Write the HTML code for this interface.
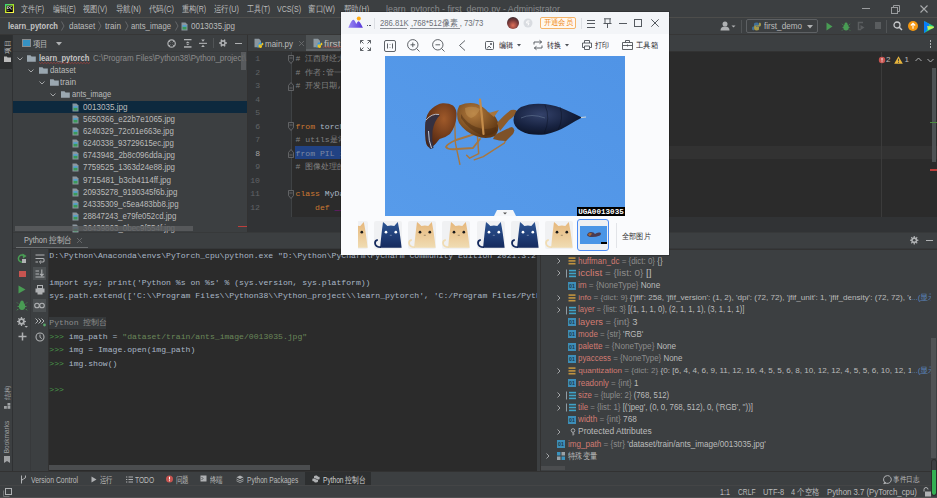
<!DOCTYPE html>
<html><head><meta charset="utf-8">
<style>
*{margin:0;padding:0;box-sizing:border-box}
html,body{width:937px;height:498px;overflow:hidden;background:#3c3f41;font-family:"Liberation Sans",sans-serif;font-size:8px;color:#bbbbbb;position:relative}
.a{position:absolute;white-space:pre}
.t{position:absolute;white-space:pre;transform-origin:0 50%}
svg{position:absolute;overflow:visible}
</style></head><body>

<div class="a" style="left:0px;top:0px;width:937px;height:17px;background:#3c3f41;"></div>
<div class="a" style="left:0px;top:17px;width:937px;height:1px;background:#4d4d4b;"></div>
<div class="a" style="left:0px;top:18px;width:937px;height:17px;background:#3c3f41;"></div>
<div class="a" style="left:0px;top:34px;width:937px;height:1px;background:#363636;"></div>
<div class="a" style="left:0px;top:35px;width:12px;height:436px;background:#3c3f41;"></div>
<div class="a" style="left:12px;top:35px;width:1px;height:436px;background:#2f3133;"></div>
<div class="a" style="left:0px;top:35px;width:12px;height:34px;background:#2d2f30;"></div>
<div class="a" style="left:13px;top:35px;width:234px;height:198px;background:#3c3f41;"></div>
<div class="a" style="left:13px;top:51px;width:234px;height:1px;background:#37393b;"></div>
<div class="a" style="left:247px;top:35px;width:690px;height:17px;background:#3c3f41;"></div>
<div class="a" style="left:247px;top:35px;width:1px;height:198px;background:#323232;"></div>
<div class="a" style="left:306px;top:35px;width:35px;height:16px;background:#4e5254;"></div>
<div class="a" style="left:306px;top:49px;width:35px;height:2px;background:#5d6164;"></div>
<div class="a" style="left:248px;top:51px;width:689px;height:1px;background:#323232;"></div>
<div class="a" style="left:248px;top:52px;width:689px;height:165px;background:#2b2b2b;"></div>
<div class="a" style="left:248px;top:52px;width:43px;height:165px;background:#313335;"></div>
<div class="a" style="left:291px;top:52px;width:1px;height:165px;background:#3f4244;"></div>
<div class="a" style="left:295px;top:146px;width:642px;height:13.4px;background:#323232;"></div>
<div class="a" style="left:881px;top:52px;width:1px;height:165px;background:#3b3b3b;"></div>
<div class="a" style="left:248px;top:217px;width:689px;height:16px;background:#313335;"></div>
<div class="a" style="left:932px;top:68px;width:4.3px;height:94px;background:#4e5254;"></div>
<div class="a" style="left:930px;top:122px;width:7px;height:1px;background:#4e8a3e;"></div>
<div class="a" style="left:930px;top:169px;width:7px;height:1.5px;background:#bc3f3c;"></div>
<div class="a" style="left:13px;top:232px;width:924px;height:1px;background:#37393a;"></div>
<div class="a" style="left:13px;top:233px;width:924px;height:15px;background:#3c3f41;"></div>
<div class="a" style="left:16px;top:247px;width:72px;height:2px;background:#6b6e70;"></div>
<div class="a" style="left:13px;top:248px;width:924px;height:1px;background:#36383a;"></div>
<div class="a" style="left:13px;top:249px;width:35px;height:222px;background:#3c3f41;"></div>
<div class="a" style="left:30px;top:249px;width:1px;height:222px;background:#37393b;"></div>
<div class="a" style="left:48px;top:249px;width:1px;height:222px;background:#323232;"></div>
<div class="a" style="left:49px;top:249px;width:488px;height:222px;background:#2b2b2b;"></div>
<div class="a" style="left:49px;top:465px;width:261px;height:5px;background:#4b4d4f;"></div>
<div class="a" style="left:540px;top:249px;width:397px;height:222px;background:#3c3f41;"></div>
<div class="a" style="left:540px;top:249px;width:1px;height:222px;background:#323232;"></div>
<div class="a" style="left:541px;top:466px;width:24px;height:4px;background:#4b4d4f;"></div>
<div class="a" style="left:931px;top:338px;width:5px;height:120px;background:#505355;"></div>
<div class="a" style="left:0px;top:471px;width:937px;height:1px;background:#323232;"></div>
<div class="a" style="left:0px;top:472px;width:937px;height:13px;background:#3c3f41;"></div>
<div class="a" style="left:305px;top:472px;width:66px;height:13px;background:#2d2f30;"></div>
<div class="a" style="left:0px;top:485px;width:937px;height:13px;background:#3c3f41;"></div>
<div class="a" style="left:0px;top:485px;width:937px;height:1px;background:#444546;"></div>
<div class="a" style="left:0px;top:497px;width:937px;height:1px;background:#4e4f50;"></div>
<div class="t" style="left:21px;top:3.80px;line-height:11.00px;font-size:8.8px;color:#bbbbbb;font-weight:400;font-family:'Liberation Sans',sans-serif;transform:scaleX(0.787);">文件(F)</div>
<div class="t" style="left:53px;top:3.80px;line-height:11.00px;font-size:8.8px;color:#bbbbbb;font-weight:400;font-family:'Liberation Sans',sans-serif;transform:scaleX(0.763);">编辑(E)</div>
<div class="t" style="left:83px;top:3.80px;line-height:11.00px;font-size:8.8px;color:#bbbbbb;font-weight:400;font-family:'Liberation Sans',sans-serif;transform:scaleX(0.807);">视图(V)</div>
<div class="t" style="left:116px;top:3.80px;line-height:11.00px;font-size:8.8px;color:#bbbbbb;font-weight:400;font-family:'Liberation Sans',sans-serif;transform:scaleX(0.827);">导航(N)</div>
<div class="t" style="left:149px;top:3.80px;line-height:11.00px;font-size:8.8px;color:#bbbbbb;font-weight:400;font-family:'Liberation Sans',sans-serif;transform:scaleX(0.827);">代码(C)</div>
<div class="t" style="left:181.5px;top:3.80px;line-height:11.00px;font-size:8.8px;color:#bbbbbb;font-weight:400;font-family:'Liberation Sans',sans-serif;transform:scaleX(0.798);">重构(R)</div>
<div class="t" style="left:214px;top:3.80px;line-height:11.00px;font-size:8.8px;color:#bbbbbb;font-weight:400;font-family:'Liberation Sans',sans-serif;transform:scaleX(0.827);">运行(U)</div>
<div class="t" style="left:246.7px;top:3.80px;line-height:11.00px;font-size:8.8px;color:#bbbbbb;font-weight:400;font-family:'Liberation Sans',sans-serif;transform:scaleX(0.790);">工具(T)</div>
<div class="t" style="left:277px;top:3.80px;line-height:11.00px;font-size:8.8px;color:#bbbbbb;font-weight:400;font-family:'Liberation Sans',sans-serif;transform:scaleX(0.805);">VCS(S)</div>
<div class="t" style="left:308px;top:3.80px;line-height:11.00px;font-size:8.8px;color:#bbbbbb;font-weight:400;font-family:'Liberation Sans',sans-serif;transform:scaleX(0.839);">窗口(W)</div>
<div class="t" style="left:343.5px;top:3.80px;line-height:11.00px;font-size:8.8px;color:#bbbbbb;font-weight:400;font-family:'Liberation Sans',sans-serif;transform:scaleX(0.831);">帮助(H)</div>
<div class="t" style="left:386px;top:3.80px;line-height:11.00px;font-size:8.8px;color:#8a8c8e;font-weight:400;font-family:'Liberation Sans',sans-serif;transform:scaleX(1.005);">learn_pytorch - first_demo.py - Administrator</div>
<div class="a" style="left:862px;top:8px;width:8px;height:1px;background:#9a9c9e;"></div>
<svg style="left:891px;top:4.5px" width="9" height="9"><rect x="0.5" y="2.5" width="6" height="6" fill="none" stroke="#9a9c9e" stroke-width="1"/><path d="M2.5 2.5V0.5H8.5V6.5H6.5" fill="none" stroke="#9a9c9e" stroke-width="1"/></svg>
<svg style="left:920px;top:5px" width="8" height="8"><path d="M0.5 0.5L7.5 7.5M7.5 0.5L0.5 7.5" stroke="#a8aaac" stroke-width="1.1"/></svg>
<svg style="left:5px;top:4px" width="9" height="9"><defs><linearGradient id="pcg" x1="0" y1="0" x2="0.6" y2="1"><stop offset="0" stop-color="#21d789"/><stop offset="0.55" stop-color="#b8e020"/><stop offset="1" stop-color="#fcf84a"/></linearGradient></defs><rect x="0" y="0" width="9" height="9" fill="url(#pcg)"/><rect x="1.4" y="1.6" width="6.4" height="6.4" fill="#000"/><path d="M2.3 5.2V2.6H3.6Q4.5 2.6 4.5 3.5Q4.5 4.3 3.6 4.3H2.3M7.2 2.8Q6.8 2.5 6.2 2.5Q5.1 2.5 5.1 3.8Q5.1 5.1 6.2 5.1Q6.8 5.1 7.2 4.8" fill="none" stroke="#e8e8e8" stroke-width="0.8"/><rect x="2.2" y="6.5" width="2.2" height="0.6" fill="#bbb"/></svg>
<div class="t" style="left:7.7px;top:21.20px;line-height:11.00px;font-size:8.8px;color:#c4c4c4;font-weight:700;font-family:'Liberation Sans',sans-serif;transform:scaleX(0.859);">learn_pytorch</div>
<svg style="left:61.0px;top:21px" width="4" height="10"><path d="M0.5 0.5L3 5L0.5 9.5" fill="none" stroke="#6e7072" stroke-width="0.8"/></svg>
<svg style="left:98.2px;top:21px" width="4" height="10"><path d="M0.5 0.5L3 5L0.5 9.5" fill="none" stroke="#6e7072" stroke-width="0.8"/></svg>
<svg style="left:124.5px;top:21px" width="4" height="10"><path d="M0.5 0.5L3 5L0.5 9.5" fill="none" stroke="#6e7072" stroke-width="0.8"/></svg>
<svg style="left:175.1px;top:21px" width="4" height="10"><path d="M0.5 0.5L3 5L0.5 9.5" fill="none" stroke="#6e7072" stroke-width="0.8"/></svg>
<div class="t" style="left:68.7px;top:21.20px;line-height:11.00px;font-size:8.8px;color:#bbbbbb;font-weight:400;font-family:'Liberation Sans',sans-serif;transform:scaleX(0.908);">dataset</div>
<div class="t" style="left:105px;top:21.20px;line-height:11.00px;font-size:8.8px;color:#bbbbbb;font-weight:400;font-family:'Liberation Sans',sans-serif;transform:scaleX(0.934);">train</div>
<div class="t" style="left:131.3px;top:21.20px;line-height:11.00px;font-size:8.8px;color:#bbbbbb;font-weight:400;font-family:'Liberation Sans',sans-serif;transform:scaleX(0.879);">ants_image</div>
<svg style="left:181px;top:21.5px" width="7" height="9"><path d="M0.5 0.5H4.5L6.5 2.5V8.5H0.5Z" fill="#9aa7b0" opacity="0.85"/><rect x="1.5" y="4.5" width="4" height="3" fill="#3a9a5b"/><rect x="1.5" y="3.2" width="4" height="1.5" fill="#4aa0d8"/></svg>
<div class="t" style="left:191px;top:21.20px;line-height:11.00px;font-size:8.8px;color:#bbbbbb;font-weight:400;font-family:'Liberation Sans',sans-serif;transform:scaleX(0.908);">0013035.jpg</div>
<svg style="left:720px;top:21px" width="16" height="10"><circle cx="5" cy="3" r="2.5" fill="#afb1b3"/><path d="M0.5 9.5Q0.5 5.5 5 5.5Q9.5 5.5 9.5 9.5Z" fill="#afb1b3"/><path d="M11.5 4.5L15.5 4.5L13.5 6.5Z" fill="#afb1b3"/></svg>
<div class="a" style="left:741px;top:20px;width:1px;height:13px;background:#515456;"></div>
<div class="a" style="left:746px;top:19px;width:72px;height:14px;border:1px solid #5e6164;border-radius:2px;background:#3c3f41"></div>
<svg style="left:752px;top:22px" width="9" height="9"><path d="M4.5 0.5C2 0.5 2 1.5 2 2.5V4H5V4.6H1.2C0.3 4.6 0 5.4 0 6.5C0 7.6 0.4 8.2 1.2 8.2H2V6.8C2 6 2.6 5.5 3.3 5.5H5.7C6.4 5.5 6.9 5 6.9 4.3V2.2C6.9 1 5.8 0.5 4.5 0.5Z" fill="#3f6f98"/><path d="M4.5 8.5C7 8.5 7 7.5 7 6.5V5H4V4.4H7.8C8.7 4.4 9 3.6 9 2.5C9 1.4 8.6 0.8 7.8 0.8H7V2.2C7 3 6.4 3.5 5.7 3.5H3.3C2.6 3.5 2.1 4 2.1 4.7V6.8C2.1 8 3.2 8.5 4.5 8.5Z" fill="#a89a48"/></svg>
<div class="t" style="left:764px;top:21.20px;line-height:11.00px;font-size:8.8px;color:#bbbbbb;font-weight:400;font-family:'Liberation Sans',sans-serif;transform:scaleX(0.925);">first_demo</div>
<svg style="left:807px;top:24.5px" width="6" height="4"><path d="M0 0H6L3 3.5Z" fill="#afb1b3"/></svg>
<svg style="left:826px;top:21.5px" width="7" height="9"><path d="M0.5 0.5L6.5 4.5L0.5 8.5Z" fill="#499c54"/></svg>
<svg style="left:841.5px;top:21.5px" width="9" height="10" viewBox="0 0 10 11"><ellipse cx="4.5" cy="5.8" rx="3" ry="3.6" fill="#499c54"/><path d="M1 3L0 2M8 3L9 2M0.5 6H8.5M1 8.5L0 9.5M8 8.5L9 9.5" stroke="#499c54" stroke-width="0.9"/><circle cx="4.5" cy="2" r="1.6" fill="#499c54"/></svg>
<svg style="left:857px;top:21px" width="8" height="10"><path d="M6 1.5H1.5V8.5H4" fill="none" stroke="#5a5d5f" stroke-width="1.5"/><path d="M3.5 4L7.5 6.5L3.5 9Z" fill="#5a5d5f"/></svg>
<div class="a" style="left:875px;top:22px;width:6px;height:7px;background:#5a5d5f;"></div>
<div class="a" style="left:886px;top:20px;width:1px;height:13px;background:#515456;"></div>
<svg style="left:893px;top:21px" width="10" height="10"><circle cx="4" cy="4" r="3" fill="none" stroke="#c9cbcd" stroke-width="1.3"/><path d="M6.2 6.2L9 9" stroke="#c9cbcd" stroke-width="1.5"/></svg>
<svg style="left:908px;top:21px" width="10" height="10"><circle cx="5" cy="5" r="5" fill="#f49810"/><path d="M5 2.3V7.8M2.8 4.5L5 2.3L7.2 4.5" fill="none" stroke="#fff" stroke-width="1.1"/></svg>
<svg style="left:923px;top:20.5px" width="12" height="12"><path d="M1 1Q1 0 2 0.5L10.5 5Q11.5 6 10.5 7L2 11.5Q1 12 1 11Z" fill="#21d789"/><path d="M1 1Q1 0 2 0.5L6.5 3L4 9L2 11.5Q1 12 1 11Z" fill="#087cfa"/><path d="M4 5L10.5 5.5Q11.5 6 10.5 7L5 9Z" fill="#fcf84a" opacity="0.75"/></svg>
<div class="t" style="left:4px;top:45.74px;line-height:8.12px;font-size:6.5px;color:#bbbbbb;font-weight:400;font-family:'Liberation Sans',sans-serif;transform:rotate(-90deg);transform-origin:4px 4px;">项目</div>
<svg style="left:4px;top:56px" width="7" height="6"><path d="M0 0.5H2.8L3.6 1.5H7V6H0Z" fill="#bbbbbb"/></svg>
<div class="t" style="left:4px;top:391.94px;line-height:8.12px;font-size:6.5px;color:#a0a2a4;font-weight:400;font-family:'Liberation Sans',sans-serif;transform:rotate(-90deg);transform-origin:4px 4px;">结构</div>
<svg style="left:4px;top:402.5px" width="7" height="6"><rect x="3.5" y="0" width="2.8" height="2.6" fill="#a0a2a4"/><rect x="0" y="3" width="2.8" height="2.8" fill="#a0a2a4"/><rect x="3.5" y="3" width="2.8" height="2.8" fill="#a0a2a4"/></svg>
<div class="t" style="left:-13px;top:433px;width:40px;line-height:8px;font-size:6.5px;color:#a0a2a4;transform:rotate(-90deg);transform-origin:20px 4px;text-align:center">Bookmarks</div>
<svg style="left:4px;top:456px" width="6" height="7"><path d="M0 0H6V7L3 5L0 7Z" fill="#a0a2a4"/></svg>
<div class="a" style="left:21.5px;top:38.5px;width:9px;height:8px;border:1px solid #8a8c8e;background:#3592c4"></div>
<div class="t" style="left:33px;top:38.50px;line-height:11.00px;font-size:8.8px;color:#bbbbbb;font-weight:400;font-family:'Liberation Sans',sans-serif;transform:scaleX(0.833);">项目</div>
<svg style="left:56px;top:41.5px" width="6" height="4"><path d="M0 0H6L3 3.5Z" fill="#afb1b3"/></svg>
<svg style="left:166.5px;top:38.8px" width="10" height="10"><circle cx="4.6" cy="4.5" r="3.7" fill="none" stroke="#afb1b3" stroke-width="1.2"/><path d="M2.2 2.1L3.4 3.3M7 2.1L5.8 3.3M2.2 6.9L3.4 5.7M7 6.9L5.8 5.7" stroke="#afb1b3" stroke-width="1"/></svg>
<svg style="left:183.5px;top:38.8px" width="8" height="9"><rect x="0" y="0" width="7.5" height="1.3" fill="#afb1b3"/><rect x="0" y="7.2" width="7.5" height="1.5" fill="#afb1b3"/><path d="M3.75 2.4L5.6 4H1.9Z M3.75 6.3L5.6 4.7H1.9Z" fill="#afb1b3"/></svg>
<svg style="left:199px;top:39px" width="8" height="9"><rect x="0" y="3.8" width="8" height="1.1" fill="#afb1b3"/><path d="M2.2 0.6H5.8L4 2.8Z M2.2 8H5.8L4 5.8Z" fill="#afb1b3"/></svg>
<div class="a" style="left:213px;top:38px;width:1px;height:10px;background:#515456;"></div>
<svg style="left:219.3px;top:39px" width="11" height="11"><path d="M6.76 3.18L7.93 3.27L7.93 4.73L6.76 4.82L6.09 5.98L6.60 7.04L5.34 7.77L4.67 6.80L3.33 6.80L2.66 7.77L1.40 7.04L1.91 5.98L1.24 4.82L0.07 4.73L0.07 3.27L1.24 3.18L1.91 2.02L1.40 0.96L2.66 0.23L3.33 1.20L4.67 1.20L5.34 0.23L6.60 0.96L6.09 2.02Z" fill="#afb1b3"/><circle cx="4.0" cy="4.0" r="1.28" fill="#3c3f41"/></svg>
<div class="a" style="left:235px;top:43px;width:7px;height:1.2px;background:#afb1b3;"></div>
<div class="a" style="left:13px;top:100.64px;width:234px;height:12.2px;background:#0d293e;"></div>
<div class="a" style="left:0;top:0;width:937px;height:498px;clip-path:inset(52px 690px 265px 13px)">
<svg style="left:17.0px;top:56.7px" width="6" height="4"><path d="M0.5 0.5L3 3L5.5 0.5" fill="none" stroke="#afb1b3" stroke-width="0.9"/></svg>
<svg style="left:27.3px;top:54.5px" width="9" height="7"><path d="M0 0.3H3.5L4.5 1.5H8.8V6.7H0Z" fill="#9aa7b0"/></svg>
<div class="t" style="left:38.6px;top:53.00px;line-height:11.00px;font-size:8.8px;color:#c4c4c4;font-weight:700;font-family:'Liberation Sans',sans-serif;transform:scaleX(0.866);">learn_pytorch</div>
<svg style="left:38.6px;top:61.80px" width="51" height="3"><path d="M0.0 0.4L1.5 1.6L3.0 0.4L4.5 1.6L6.0 0.4L7.5 1.6L9.0 0.4L10.5 1.6L12.0 0.4L13.5 1.6L15.0 0.4L16.5 1.6L18.0 0.4L19.5 1.6L21.0 0.4L22.5 1.6L24.0 0.4L25.5 1.6L27.0 0.4L28.5 1.6L30.0 0.4L31.5 1.6L33.0 0.4L34.5 1.6L36.0 0.4L37.5 1.6L39.0 0.4L40.5 1.6L42.0 0.4L43.5 1.6L45.0 0.4L46.5 1.6L48.0 0.4L49.5 1.6L51.0 0.4" fill="none" stroke="#c8403c" stroke-width="0.55"/></svg>
<div class="t" style="left:93px;top:53.00px;line-height:11.00px;font-size:8.8px;color:#8c8c8c;font-weight:400;font-family:'Liberation Sans',sans-serif;transform:scaleX(0.904);">C:\Program Files\Python38\Python_project\</div>
<svg style="left:28.0px;top:68.86px" width="6" height="4"><path d="M0.5 0.5L3 3L5.5 0.5" fill="none" stroke="#afb1b3" stroke-width="0.9"/></svg>
<svg style="left:39px;top:66.66px" width="9" height="7"><path d="M0 0.3H3.5L4.5 1.5H8.8V6.7H0Z" fill="#9aa7b0"/></svg>
<div class="t" style="left:49.8px;top:65.16px;line-height:11.00px;font-size:8.8px;color:#bbbbbb;font-weight:400;font-family:'Liberation Sans',sans-serif;transform:scaleX(0.891);">dataset</div>
<svg style="left:39.3px;top:81.02px" width="6" height="4"><path d="M0.5 0.5L3 3L5.5 0.5" fill="none" stroke="#afb1b3" stroke-width="0.9"/></svg>
<svg style="left:49.8px;top:78.82px" width="9" height="7"><path d="M0 0.3H3.5L4.5 1.5H8.8V6.7H0Z" fill="#9aa7b0"/></svg>
<div class="t" style="left:60.2px;top:77.32px;line-height:11.00px;font-size:8.8px;color:#bbbbbb;font-weight:400;font-family:'Liberation Sans',sans-serif;transform:scaleX(0.940);">train</div>
<svg style="left:50.1px;top:93.18px" width="6" height="4"><path d="M0.5 0.5L3 3L5.5 0.5" fill="none" stroke="#afb1b3" stroke-width="0.9"/></svg>
<svg style="left:61px;top:90.98px" width="9" height="7"><path d="M0 0.3H3.5L4.5 1.5H8.8V6.7H0Z" fill="#9aa7b0"/></svg>
<div class="t" style="left:71.5px;top:89.48px;line-height:11.00px;font-size:8.8px;color:#bbbbbb;font-weight:400;font-family:'Liberation Sans',sans-serif;transform:scaleX(0.864);">ants_image</div>
<svg style="left:72.3px;top:102.64px" width="7" height="9"><path d="M0.5 0.5H4.5L6.5 2.5V8.5H0.5Z" fill="#9aa7b0" opacity="0.85"/><rect x="1.5" y="4.5" width="4" height="3" fill="#3a9a5b"/><rect x="1.5" y="3.2" width="4" height="1.5" fill="#4aa0d8"/></svg>
<div class="t" style="left:82.7px;top:101.64px;line-height:11.00px;font-size:8.8px;color:#bbbbbb;font-weight:400;font-family:'Liberation Sans',sans-serif;transform:scaleX(0.921);">0013035.jpg</div>
<svg style="left:72.3px;top:114.8px" width="7" height="9"><path d="M0.5 0.5H4.5L6.5 2.5V8.5H0.5Z" fill="#9aa7b0" opacity="0.85"/><rect x="1.5" y="4.5" width="4" height="3" fill="#3a9a5b"/><rect x="1.5" y="3.2" width="4" height="1.5" fill="#4aa0d8"/></svg>
<div class="t" style="left:82.7px;top:113.80px;line-height:11.00px;font-size:8.8px;color:#bbbbbb;font-weight:400;font-family:'Liberation Sans',sans-serif;transform:scaleX(0.900);">5650366_e22b7e1065.jpg</div>
<svg style="left:72.3px;top:126.96000000000001px" width="7" height="9"><path d="M0.5 0.5H4.5L6.5 2.5V8.5H0.5Z" fill="#9aa7b0" opacity="0.85"/><rect x="1.5" y="4.5" width="4" height="3" fill="#3a9a5b"/><rect x="1.5" y="3.2" width="4" height="1.5" fill="#4aa0d8"/></svg>
<div class="t" style="left:82.7px;top:125.96px;line-height:11.00px;font-size:8.8px;color:#bbbbbb;font-weight:400;font-family:'Liberation Sans',sans-serif;transform:scaleX(0.892);">6240329_72c01e663e.jpg</div>
<svg style="left:72.3px;top:139.12px" width="7" height="9"><path d="M0.5 0.5H4.5L6.5 2.5V8.5H0.5Z" fill="#9aa7b0" opacity="0.85"/><rect x="1.5" y="4.5" width="4" height="3" fill="#3a9a5b"/><rect x="1.5" y="3.2" width="4" height="1.5" fill="#4aa0d8"/></svg>
<div class="t" style="left:82.7px;top:138.12px;line-height:11.00px;font-size:8.8px;color:#bbbbbb;font-weight:400;font-family:'Liberation Sans',sans-serif;transform:scaleX(0.892);">6240338_93729615ec.jpg</div>
<svg style="left:72.3px;top:151.28px" width="7" height="9"><path d="M0.5 0.5H4.5L6.5 2.5V8.5H0.5Z" fill="#9aa7b0" opacity="0.85"/><rect x="1.5" y="4.5" width="4" height="3" fill="#3a9a5b"/><rect x="1.5" y="3.2" width="4" height="1.5" fill="#4aa0d8"/></svg>
<div class="t" style="left:82.7px;top:150.28px;line-height:11.00px;font-size:8.8px;color:#bbbbbb;font-weight:400;font-family:'Liberation Sans',sans-serif;transform:scaleX(0.904);">6743948_2b8c096dda.jpg</div>
<svg style="left:72.3px;top:163.44px" width="7" height="9"><path d="M0.5 0.5H4.5L6.5 2.5V8.5H0.5Z" fill="#9aa7b0" opacity="0.85"/><rect x="1.5" y="4.5" width="4" height="3" fill="#3a9a5b"/><rect x="1.5" y="3.2" width="4" height="1.5" fill="#4aa0d8"/></svg>
<div class="t" style="left:82.7px;top:162.44px;line-height:11.00px;font-size:8.8px;color:#bbbbbb;font-weight:400;font-family:'Liberation Sans',sans-serif;transform:scaleX(0.900);">7759525_1363d24e88.jpg</div>
<svg style="left:72.3px;top:175.6px" width="7" height="9"><path d="M0.5 0.5H4.5L6.5 2.5V8.5H0.5Z" fill="#9aa7b0" opacity="0.85"/><rect x="1.5" y="4.5" width="4" height="3" fill="#3a9a5b"/><rect x="1.5" y="3.2" width="4" height="1.5" fill="#4aa0d8"/></svg>
<div class="t" style="left:82.7px;top:174.60px;line-height:11.00px;font-size:8.8px;color:#bbbbbb;font-weight:400;font-family:'Liberation Sans',sans-serif;transform:scaleX(0.916);">9715481_b3cb4114ff.jpg</div>
<svg style="left:72.3px;top:187.76px" width="7" height="9"><path d="M0.5 0.5H4.5L6.5 2.5V8.5H0.5Z" fill="#9aa7b0" opacity="0.85"/><rect x="1.5" y="4.5" width="4" height="3" fill="#3a9a5b"/><rect x="1.5" y="3.2" width="4" height="1.5" fill="#4aa0d8"/></svg>
<div class="t" style="left:82.7px;top:186.76px;line-height:11.00px;font-size:8.8px;color:#bbbbbb;font-weight:400;font-family:'Liberation Sans',sans-serif;transform:scaleX(0.901);">20935278_9190345f6b.jpg</div>
<svg style="left:72.3px;top:199.92000000000002px" width="7" height="9"><path d="M0.5 0.5H4.5L6.5 2.5V8.5H0.5Z" fill="#9aa7b0" opacity="0.85"/><rect x="1.5" y="4.5" width="4" height="3" fill="#3a9a5b"/><rect x="1.5" y="3.2" width="4" height="1.5" fill="#4aa0d8"/></svg>
<div class="t" style="left:82.7px;top:198.92px;line-height:11.00px;font-size:8.8px;color:#bbbbbb;font-weight:400;font-family:'Liberation Sans',sans-serif;transform:scaleX(0.896);">24335309_c5ea483bb8.jpg</div>
<svg style="left:72.3px;top:212.08px" width="7" height="9"><path d="M0.5 0.5H4.5L6.5 2.5V8.5H0.5Z" fill="#9aa7b0" opacity="0.85"/><rect x="1.5" y="4.5" width="4" height="3" fill="#3a9a5b"/><rect x="1.5" y="3.2" width="4" height="1.5" fill="#4aa0d8"/></svg>
<div class="t" style="left:82.7px;top:211.08px;line-height:11.00px;font-size:8.8px;color:#bbbbbb;font-weight:400;font-family:'Liberation Sans',sans-serif;transform:scaleX(0.895);">28847243_e79fe052cd.jpg</div>
<svg style="left:72.3px;top:224.24px" width="7" height="9"><path d="M0.5 0.5H4.5L6.5 2.5V8.5H0.5Z" fill="#9aa7b0" opacity="0.85"/><rect x="1.5" y="4.5" width="4" height="3" fill="#3a9a5b"/><rect x="1.5" y="3.2" width="4" height="1.5" fill="#4aa0d8"/></svg>
<div class="t" style="left:82.7px;top:223.24px;line-height:11.00px;font-size:8.8px;color:#bbbbbb;font-weight:400;font-family:'Liberation Sans',sans-serif;transform:scaleX(0.904);">36439863_0bec9f554f.jpg</div>
</div>
<div class="a" style="left:241px;top:52px;width:5px;height:18px;background:rgba(95,98,100,0.8);"></div>
<div class="a" style="left:15px;top:226px;width:178px;height:5px;background:rgba(90,93,95,0.85)"></div>
<div class="a" style="left:238px;top:226px;width:9px;height:1.2px;background:#bc3f3c;"></div>
<svg style="left:254px;top:38px" width="10" height="11"><path d="M0.5 0.8H5L7 2.8V9.2H0.5Z" fill="#9aa7b0" opacity="0.85"/><g transform="translate(3.2,4.2) scale(0.68)"><path d="M4.5 0.5C2 0.5 2 1.5 2 2.5V4H5V4.6H1.2C0.3 4.6 0 5.4 0 6.5C0 7.6 0.4 8.2 1.2 8.2H2V6.8C2 6 2.6 5.5 3.3 5.5H5.7C6.4 5.5 6.9 5 6.9 4.3V2.2C6.9 1 5.8 0.5 4.5 0.5Z" fill="#3c9ad8"/><path d="M4.5 8.5C7 8.5 7 7.5 7 6.5V5H4V4.4H7.8C8.7 4.4 9 3.6 9 2.5C9 1.4 8.6 0.8 7.8 0.8H7V2.2C7 3 6.4 3.5 5.7 3.5H3.3C2.6 3.5 2.1 4 2.1 4.7V6.8C2.1 8 3.2 8.5 4.5 8.5Z" fill="#f5c518"/></g></svg>
<div class="t" style="left:265px;top:38.50px;line-height:11.00px;font-size:8.8px;color:#bbbbbb;font-weight:400;font-family:'Liberation Sans',sans-serif;transform:scaleX(0.909);">main.py</div>
<svg style="left:298.5px;top:40.5px" width="5" height="5"><path d="M0 0L5 5M5 0L0 5" stroke="#6e7072" stroke-width="0.8"/></svg>
<svg style="left:313px;top:38px" width="10" height="11"><path d="M0.5 0.8H5L7 2.8V9.2H0.5Z" fill="#9aa7b0" opacity="0.85"/><g transform="translate(3.2,4.2) scale(0.68)"><path d="M4.5 0.5C2 0.5 2 1.5 2 2.5V4H5V4.6H1.2C0.3 4.6 0 5.4 0 6.5C0 7.6 0.4 8.2 1.2 8.2H2V6.8C2 6 2.6 5.5 3.3 5.5H5.7C6.4 5.5 6.9 5 6.9 4.3V2.2C6.9 1 5.8 0.5 4.5 0.5Z" fill="#3c9ad8"/><path d="M4.5 8.5C7 8.5 7 7.5 7 6.5V5H4V4.4H7.8C8.7 4.4 9 3.6 9 2.5C9 1.4 8.6 0.8 7.8 0.8H7V2.2C7 3 6.4 3.5 5.7 3.5H3.3C2.6 3.5 2.1 4 2.1 4.7V6.8C2.1 8 3.2 8.5 4.5 8.5Z" fill="#f5c518"/></g></svg>
<div class="t" style="left:323.6px;top:38.50px;line-height:11.00px;font-size:8.8px;color:#bbbbbb;font-weight:400;font-family:'Liberation Sans',sans-serif;transform:scaleX(1.174);">first_</div>
<svg style="left:323px;top:46px" width="20" height="3"><path d="M0 1.5L1.5 0.5L3 1.5L4.5 0.5L6 1.5L7.5 0.5L9 1.5L10.5 0.5L12 1.5L13.5 0.5L15 1.5L16.5 0.5L18 1.5" fill="none" stroke="#bc3f3c" stroke-width="0.6"/></svg>
<div class="a" style="left:0;top:0;width:937px;height:498px;clip-path:inset(52px 0px 281px 248px)">
<div class="t" style="left:255.128px;top:54.33px;line-height:10.15px;font-size:8.12px;color:#606366;font-weight:400;font-family:'Liberation Mono',monospace;">1</div>
<div class="t" style="left:255.128px;top:67.80px;line-height:10.15px;font-size:8.12px;color:#606366;font-weight:400;font-family:'Liberation Mono',monospace;">2</div>
<div class="t" style="left:255.128px;top:81.27px;line-height:10.15px;font-size:8.12px;color:#606366;font-weight:400;font-family:'Liberation Mono',monospace;">3</div>
<div class="t" style="left:255.128px;top:94.73px;line-height:10.15px;font-size:8.12px;color:#606366;font-weight:400;font-family:'Liberation Mono',monospace;">4</div>
<div class="t" style="left:255.128px;top:108.20px;line-height:10.15px;font-size:8.12px;color:#606366;font-weight:400;font-family:'Liberation Mono',monospace;">5</div>
<div class="t" style="left:255.128px;top:121.67px;line-height:10.15px;font-size:8.12px;color:#606366;font-weight:400;font-family:'Liberation Mono',monospace;">6</div>
<div class="t" style="left:255.128px;top:135.15px;line-height:10.15px;font-size:8.12px;color:#606366;font-weight:400;font-family:'Liberation Mono',monospace;">7</div>
<div class="t" style="left:255.128px;top:148.62px;line-height:10.15px;font-size:8.12px;color:#a4a3a3;font-weight:400;font-family:'Liberation Mono',monospace;">8</div>
<div class="t" style="left:255.128px;top:162.09px;line-height:10.15px;font-size:8.12px;color:#606366;font-weight:400;font-family:'Liberation Mono',monospace;">9</div>
<div class="t" style="left:250.256px;top:175.56px;line-height:10.15px;font-size:8.12px;color:#606366;font-weight:400;font-family:'Liberation Mono',monospace;">10</div>
<div class="t" style="left:250.256px;top:189.03px;line-height:10.15px;font-size:8.12px;color:#606366;font-weight:400;font-family:'Liberation Mono',monospace;">11</div>
<div class="t" style="left:250.256px;top:202.50px;line-height:10.15px;font-size:8.12px;color:#606366;font-weight:400;font-family:'Liberation Mono',monospace;">12</div>
<div class="t" style="left:250.256px;top:215.97px;line-height:10.15px;font-size:8.12px;color:#606366;font-weight:400;font-family:'Liberation Mono',monospace;">13</div>
<div class="a" style="left:295px;top:146.09px;width:50px;height:13.4px;background:#214283;"></div>
<svg style="left:288px;top:54.9px" width="6" height="9"><path d="M0.5 0.5V5.5L3 8.5L5.5 5.5V0.5Z" fill="#313335" stroke="#6e7072" stroke-width="0.8"/><path d="M1.5 3H4.5" stroke="#6e7072" stroke-width="0.8"/></svg>
<svg style="left:288px;top:81.84px" width="6" height="9"><path d="M0.5 8.5V3.5L3 0.5L5.5 3.5V8.5Z" fill="#313335" stroke="#6e7072" stroke-width="0.8"/><path d="M1.5 6H4.5" stroke="#6e7072" stroke-width="0.8"/></svg>
<svg style="left:288px;top:122.25px" width="6" height="9"><path d="M0.5 0.5V5.5L3 8.5L5.5 5.5V0.5Z" fill="#313335" stroke="#6e7072" stroke-width="0.8"/><path d="M1.5 3H4.5" stroke="#6e7072" stroke-width="0.8"/></svg>
<svg style="left:288px;top:149.19px" width="6" height="9"><path d="M0.5 8.5V3.5L3 0.5L5.5 3.5V8.5Z" fill="#313335" stroke="#6e7072" stroke-width="0.8"/><path d="M1.5 6H4.5" stroke="#6e7072" stroke-width="0.8"/></svg>
<svg style="left:288px;top:189.60000000000002px" width="6" height="9"><path d="M0.5 0.5V5.5L3 8.5L5.5 5.5V0.5Z" fill="#313335" stroke="#6e7072" stroke-width="0.8"/><path d="M1.5 3H4.5" stroke="#6e7072" stroke-width="0.8"/></svg>
<div class="t" style="left:295.6px;top:54.33px;line-height:10.15px;font-size:8.12px;color:#a9b7c6;font-weight:400;font-family:'Liberation Mono',monospace;"><span style="color:#808080"># 江西财经大学</span></div>
<div class="t" style="left:295.6px;top:67.80px;line-height:10.15px;font-size:8.12px;color:#a9b7c6;font-weight:400;font-family:'Liberation Mono',monospace;"><span style="color:#808080"># 作者:管一</span></div>
<div class="t" style="left:295.6px;top:81.27px;line-height:10.15px;font-size:8.12px;color:#a9b7c6;font-weight:400;font-family:'Liberation Mono',monospace;"><span style="color:#808080"># 开发日期,</span></div>
<div class="t" style="left:295.6px;top:121.67px;line-height:10.15px;font-size:8.12px;color:#a9b7c6;font-weight:400;font-family:'Liberation Mono',monospace;"><span style="color:#cc7832">from </span><span style="color:#a9b7c6">torch</span></div>
<div class="t" style="left:295.6px;top:135.15px;line-height:10.15px;font-size:8.12px;color:#a9b7c6;font-weight:400;font-family:'Liberation Mono',monospace;"><span style="color:#808080"># utils是常用</span></div>
<div class="t" style="left:295.6px;top:148.62px;line-height:10.15px;font-size:8.12px;color:#a9b7c6;font-weight:400;font-family:'Liberation Mono',monospace;"><span style="color:#7d8aa3">from PIL i</span></div>
<div class="t" style="left:295.6px;top:162.09px;line-height:10.15px;font-size:8.12px;color:#a9b7c6;font-weight:400;font-family:'Liberation Mono',monospace;"><span style="color:#808080"># 图像处理的</span></div>
<div class="t" style="left:295.6px;top:189.03px;line-height:10.15px;font-size:8.12px;color:#a9b7c6;font-weight:400;font-family:'Liberation Mono',monospace;"><span style="color:#cc7832">class </span><span style="color:#a9b7c6">MyData</span></div>
<div class="t" style="left:295.6px;top:202.50px;line-height:10.15px;font-size:8.12px;color:#a9b7c6;font-weight:400;font-family:'Liberation Mono',monospace;"><span style="color:#cc7832">    def </span><span style="color:#b200b2">__init</span></div>
</div>
<svg style="left:876.5px;top:55px" width="10" height="10"><circle cx="5" cy="5" r="3.2" fill="#c75450"/><path d="M5 3V5.6M5 6.4V7.2" stroke="#fff" stroke-width="0.9"/></svg>
<div class="t" style="left:886px;top:55.00px;line-height:10.00px;font-size:8px;color:#bbbbbb;font-weight:400;font-family:'Liberation Sans',sans-serif;">2</div>
<svg style="left:894px;top:55.5px" width="9" height="8"><path d="M4.5 0.3L8.8 7.7H0.2Z" fill="#e8b53c"/><path d="M4.5 2.8V5.3M4.5 6V6.8" stroke="#3c3f41" stroke-width="0.9"/></svg>
<div class="t" style="left:904.5px;top:55.00px;line-height:10.00px;font-size:8px;color:#bbbbbb;font-weight:400;font-family:'Liberation Sans',sans-serif;">1</div>
<svg style="left:914.5px;top:57px" width="7" height="5"><path d="M0.5 4L3.5 1L6.5 4" fill="none" stroke="#afb1b3" stroke-width="1"/></svg>
<svg style="left:927px;top:57.5px" width="7" height="5"><path d="M0.5 1L3.5 4L6.5 1" fill="none" stroke="#afb1b3" stroke-width="1"/></svg>
<div class="a" style="left:929.5px;top:40px;width:1.5px;height:1.5px;background:#afb1b3;"></div>
<div class="a" style="left:929.5px;top:43px;width:1.5px;height:1.5px;background:#afb1b3;"></div>
<div class="a" style="left:929.5px;top:46px;width:1.5px;height:1.5px;background:#afb1b3;"></div>
<div class="t" style="left:24px;top:235.00px;line-height:11.00px;font-size:8.8px;color:#bbbbbb;font-weight:400;font-family:'Liberation Sans',sans-serif;transform:scaleX(0.844);">Python 控制台</div>
<svg style="left:76.5px;top:238px" width="5" height="5"><path d="M0 0L5 5M5 0L0 5" stroke="#6e7072" stroke-width="0.8"/></svg>
<svg style="left:910px;top:236px" width="11.5" height="11.5"><path d="M7.24 3.59L8.46 3.67L8.46 4.83L7.24 4.91L6.83 5.90L7.64 6.82L6.82 7.64L5.90 6.83L4.91 7.24L4.83 8.46L3.67 8.46L3.59 7.24L2.60 6.83L1.68 7.64L0.86 6.82L1.67 5.90L1.26 4.91L0.04 4.83L0.04 3.67L1.26 3.59L1.67 2.60L0.86 1.68L1.68 0.86L2.60 1.67L3.59 1.26L3.67 0.04L4.83 0.04L4.91 1.26L5.90 1.67L6.82 0.86L7.64 1.68L6.83 2.60Z" fill="#afb1b3"/><circle cx="4.25" cy="4.25" r="1.36" fill="#3c3f41"/></svg>
<div class="a" style="left:926px;top:240px;width:7px;height:1.2px;background:#afb1b3;"></div>
<svg style="left:17px;top:253px" width="10" height="11"><path d="M8 3.5A3.6 3.6 0 1 0 8.3 7" fill="none" stroke="#499c54" stroke-width="1.5"/><path d="M5.5 0.5L9.5 3L6 5.5Z" fill="#499c54"/><rect x="5" y="6" width="4" height="4" fill="#afb1b3"/></svg>
<div class="a" style="left:19px;top:270.5px;width:6.5px;height:6.5px;background:#c75450;"></div>
<svg style="left:18px;top:285px" width="8" height="9"><path d="M0.5 0.5L7.5 4.5L0.5 8.5Z" fill="#499c54"/></svg>
<svg style="left:17px;top:300px" width="10" height="11"><ellipse cx="5" cy="6.3" rx="3.2" ry="3.8" fill="#499c54"/><circle cx="5" cy="2.3" r="1.7" fill="#499c54"/><path d="M1 3.5L0 2.5M9 3.5L10 2.5M0.5 6.5H9.5M1.2 9L0 10.3M8.8 9L10 10.3" stroke="#499c54" stroke-width="0.9"/></svg>
<svg style="left:17px;top:316.5px" width="12" height="12"><path d="M7.66 3.81L8.96 3.88L8.96 5.12L7.66 5.19L7.23 6.25L8.09 7.22L7.22 8.09L6.25 7.23L5.19 7.66L5.12 8.96L3.88 8.96L3.81 7.66L2.75 7.23L1.78 8.09L0.91 7.22L1.77 6.25L1.34 5.19L0.04 5.12L0.04 3.88L1.34 3.81L1.77 2.75L0.91 1.78L1.78 0.91L2.75 1.77L3.81 1.34L3.88 0.04L5.12 0.04L5.19 1.34L6.25 1.77L7.22 0.91L8.09 1.78L7.23 2.75Z" fill="#afb1b3"/><circle cx="4.5" cy="4.5" r="1.44" fill="#3c3f41"/><path d="M7.5 9H11L9.2 10.8Z" fill="#afb1b3"/></svg>
<svg style="left:18px;top:332px" width="9" height="9"><path d="M4.5 0.5V8.5M0.5 4.5H8.5" stroke="#afb1b3" stroke-width="1.5"/></svg>
<div class="a" style="left:33px;top:267px;width:13px;height:13px;background:#4c5052;"></div>
<div class="a" style="left:33px;top:299px;width:13px;height:13px;background:#4c5052;"></div>
<svg style="left:35px;top:254px" width="10" height="9"><path d="M0.5 1H9.5M0.5 4.5H8C9.5 4.5 9.5 8 8 8H5M0.5 8H3" fill="none" stroke="#afb1b3" stroke-width="1.1"/><path d="M6 6.3L4.3 8L6 9.7" fill="none" stroke="#afb1b3" stroke-width="0.9"/></svg>
<svg style="left:35px;top:269px" width="10" height="10"><path d="M0.5 2H4M0.5 5H4M0.5 8H9.5M6.8 0.5V6.5M5 4.8L6.8 6.6L8.6 4.8" fill="none" stroke="#afb1b3" stroke-width="1.1"/></svg>
<svg style="left:35px;top:285px" width="10" height="10"><rect x="2.5" y="0.5" width="5" height="3" fill="none" stroke="#afb1b3" stroke-width="1"/><rect x="0.5" y="3.5" width="9" height="4" fill="#afb1b3"/><rect x="2.5" y="6.5" width="5" height="3" fill="#afb1b3"/></svg>
<svg style="left:34px;top:302px" width="11" height="7"><circle cx="3" cy="3.5" r="2.3" fill="none" stroke="#afb1b3" stroke-width="1.1"/><circle cx="8" cy="3.5" r="2.3" fill="none" stroke="#afb1b3" stroke-width="1.1"/></svg>
<svg style="left:35px;top:317px" width="11" height="10"><path d="M0.5 1.5L3 4L0.5 6.5M3.5 1.5L6 4L3.5 6.5M6.5 1.5L9 4L6.5 6.5" fill="none" stroke="#afb1b3" stroke-width="1"/><circle cx="9.5" cy="8" r="1.4" fill="#59a869"/></svg>
<svg style="left:35px;top:332px" width="10" height="10"><circle cx="5" cy="5" r="4" fill="none" stroke="#afb1b3" stroke-width="1.1"/><path d="M5 2.5V5.3L6.8 6.6" fill="none" stroke="#afb1b3" stroke-width="1"/></svg>
<div class="a" style="left:0;top:0;width:937px;height:498px;clip-path:inset(249px 400px 33px 49px)">
<div class="t" style="left:49.3px;top:250.93px;line-height:10.15px;font-size:8.12px;color:#a9b7c6;font-weight:400;font-family:'Liberation Mono',monospace;">D:\Python\Anaconda\envs\PyTorch_cpu\python.exe &quot;D:\Python\PyCharm\PyCharm Community Edition 2021.3.2\plugins\python-ce\helpers\pydev\pydevconsole.py&quot; --mode=client</div>
<div class="t" style="left:49.3px;top:277.82px;line-height:10.15px;font-size:8.12px;color:#a9b7c6;font-weight:400;font-family:'Liberation Mono',monospace;">import sys; print(&#x27;Python %s on %s&#x27; % (sys.version, sys.platform))</div>
<div class="t" style="left:49.3px;top:291.28px;line-height:10.15px;font-size:8.12px;color:#a9b7c6;font-weight:400;font-family:'Liberation Mono',monospace;">sys.path.extend([&#x27;C:\\Program Files\\Python38\\Python_project\\learn_pytorch&#x27;, &#x27;C:/Program Files/Python38/Python_project/learn_pytorch&#x27;])</div>
<div class="a" style="left:49px;top:317.25px;width:57px;height:12px;background:#35383a;"></div>
<div class="t" style="left:49.3px;top:318.18px;line-height:10.15px;font-size:8.12px;color:#8c8c8c;font-weight:400;font-family:'Liberation Mono',monospace;">Python 控制台</div>
<div class="t" style="left:49.3px;top:331.62px;line-height:10.15px;font-size:8.12px;color:#a9b7c6;font-weight:400;font-family:'Liberation Mono',monospace;"><span style="color:#4a9a4a">&gt;&gt;&gt; </span><span style="color:#a9b7c6">img_path = </span><span style="color:#6a8759">&quot;dataset/train/ants_image/0013035.jpg&quot;</span></div>
<div class="t" style="left:49.3px;top:345.07px;line-height:10.15px;font-size:8.12px;color:#a9b7c6;font-weight:400;font-family:'Liberation Mono',monospace;"><span style="color:#4a9a4a">&gt;&gt;&gt; </span><span style="color:#a9b7c6">img = Image.open(img_path)</span></div>
<div class="t" style="left:49.3px;top:358.53px;line-height:10.15px;font-size:8.12px;color:#a9b7c6;font-weight:400;font-family:'Liberation Mono',monospace;"><span style="color:#4a9a4a">&gt;&gt;&gt; </span><span style="color:#a9b7c6">img.show()</span></div>
<div class="t" style="left:49.3px;top:385.43px;line-height:10.15px;font-size:8.12px;color:#4a9a4a;font-weight:400;font-family:'Liberation Mono',monospace;">&gt;&gt;&gt;</div>
</div>
<div class="a" style="left:541px;top:249px;width:396px;height:1px;background:#323232;"></div>
<div class="a" style="left:0;top:0;width:937px;height:498px;clip-path:inset(249px 6px 32px 541px)">
<svg style="left:557px;top:258.2px" width="4" height="6"><path d="M0.5 0.5L3 3L0.5 5.5" fill="none" stroke="#afb1b3" stroke-width="0.9"/></svg>
<svg style="left:567.5px;top:257.2px" width="8" height="8"><rect x="0.5" y="0.3" width="7" height="1.6" fill="#c09340"/><rect x="0.5" y="3.1" width="7" height="1.6" fill="#c09340"/><rect x="0.5" y="5.9" width="7" height="1.6" fill="#c09340"/></svg>
<div class="t" style="left:578.3px;top:255.63px;line-height:11.14px;font-size:8.91px;color:#d27b72;font-weight:400;font-family:'Liberation Sans',sans-serif;transform:scaleX(0.893);"><span style="color:#d27b72">huffman_dc</span><span style="color:#8c8c8c"> = </span><span style="color:#8c8c8c">{dict: 0}</span><span style="color:#bbbbbb"> {}</span></div>
<svg style="left:557px;top:270.4px" width="4" height="6"><path d="M0.5 0.5L3 3L0.5 5.5" fill="none" stroke="#afb1b3" stroke-width="0.9"/></svg>
<svg style="left:565.5px;top:268.9px" width="10" height="9"><rect x="0" y="0.5" width="0.9" height="8" fill="#9aa7b0"/><rect x="3" y="0.8" width="7" height="1.6" fill="#3fa2c7"/><rect x="3" y="3.7" width="7" height="1.6" fill="#3fa2c7"/><rect x="3" y="6.6" width="7" height="1.6" fill="#3fa2c7"/></svg>
<div class="t" style="left:578.3px;top:267.83px;line-height:11.14px;font-size:8.91px;color:#d27b72;font-weight:400;font-family:'Liberation Sans',sans-serif;transform:scaleX(1.112);"><span style="color:#d27b72">icclist</span><span style="color:#8c8c8c"> = </span><span style="color:#8c8c8c">{list: 0}</span><span style="color:#bbbbbb"> []</span></div>
<svg style="left:567.5px;top:281.59999999999997px" width="8" height="8"><rect x="0" y="0" width="8" height="8" fill="#3d8eb9"/><text x="4" y="6.2" font-size="5.2" text-anchor="middle" fill="#1e3a4a" font-family="Liberation Sans" font-weight="700">01</text></svg>
<div class="t" style="left:578.3px;top:280.03px;line-height:11.14px;font-size:8.91px;color:#d27b72;font-weight:400;font-family:'Liberation Sans',sans-serif;transform:scaleX(0.914);"><span style="color:#d27b72">im</span><span style="color:#8c8c8c"> = </span><span style="color:#8c8c8c">{NoneType}</span><span style="color:#bbbbbb"> None</span></div>
<svg style="left:557px;top:294.79999999999995px" width="4" height="6"><path d="M0.5 0.5L3 3L0.5 5.5" fill="none" stroke="#afb1b3" stroke-width="0.9"/></svg>
<svg style="left:567.5px;top:293.79999999999995px" width="8" height="8"><rect x="0.5" y="0.3" width="7" height="1.6" fill="#c09340"/><rect x="0.5" y="3.1" width="7" height="1.6" fill="#c09340"/><rect x="0.5" y="5.9" width="7" height="1.6" fill="#c09340"/></svg>
<div class="a" style="left:0;top:0;width:937px;height:498px;clip-path:inset(249px 26px 32px 541px)">
<div class="t" style="left:578.3px;top:292.74px;line-height:10.12px;font-size:8.1px;color:#d27b72;font-weight:400;font-family:'Liberation Sans',sans-serif;"><span style="color:#d27b72">info</span><span style="color:#8c8c8c"> = </span><span style="color:#8c8c8c">{dict: 9}</span><span style="color:#bbbbbb"> {&#x27;jfif&#x27;: 258, &#x27;jfif_version&#x27;: (1, 2), &#x27;dpi&#x27;: (72, 72), &#x27;jfif_unit&#x27;: 1, &#x27;jfif_density&#x27;: (72, 72), &#x27;ex</span></div>
</div>
<svg style="left:557px;top:307.0px" width="4" height="6"><path d="M0.5 0.5L3 3L0.5 5.5" fill="none" stroke="#afb1b3" stroke-width="0.9"/></svg>
<svg style="left:565.5px;top:305.5px" width="10" height="9"><rect x="0" y="0.5" width="0.9" height="8" fill="#9aa7b0"/><rect x="3" y="0.8" width="7" height="1.6" fill="#3fa2c7"/><rect x="3" y="3.7" width="7" height="1.6" fill="#3fa2c7"/><rect x="3" y="6.6" width="7" height="1.6" fill="#3fa2c7"/></svg>
<div class="t" style="left:578.3px;top:304.43px;line-height:11.14px;font-size:8.91px;color:#d27b72;font-weight:400;font-family:'Liberation Sans',sans-serif;transform:scaleX(0.852);"><span style="color:#d27b72">layer</span><span style="color:#8c8c8c"> = </span><span style="color:#8c8c8c">{list: 3}</span><span style="color:#bbbbbb"> [(1, 1, 1, 0), (2, 1, 1, 1), (3, 1, 1, 1)]</span></div>
<svg style="left:567.5px;top:318.2px" width="8" height="8"><rect x="0" y="0" width="8" height="8" fill="#3d8eb9"/><text x="4" y="6.2" font-size="5.2" text-anchor="middle" fill="#1e3a4a" font-family="Liberation Sans" font-weight="700">01</text></svg>
<div class="t" style="left:578.3px;top:316.63px;line-height:11.14px;font-size:8.91px;color:#d27b72;font-weight:400;font-family:'Liberation Sans',sans-serif;transform:scaleX(1.049);"><span style="color:#d27b72">layers</span><span style="color:#8c8c8c"> = </span><span style="color:#8c8c8c">{int}</span><span style="color:#bbbbbb"> 3</span></div>
<svg style="left:567.5px;top:330.4px" width="8" height="8"><rect x="0" y="0" width="8" height="8" fill="#3d8eb9"/><text x="4" y="6.2" font-size="5.2" text-anchor="middle" fill="#1e3a4a" font-family="Liberation Sans" font-weight="700">01</text></svg>
<div class="t" style="left:578.3px;top:328.83px;line-height:11.14px;font-size:8.91px;color:#d27b72;font-weight:400;font-family:'Liberation Sans',sans-serif;transform:scaleX(0.889);"><span style="color:#d27b72">mode</span><span style="color:#8c8c8c"> = </span><span style="color:#8c8c8c">{str}</span><span style="color:#bbbbbb"> &#x27;RGB&#x27;</span></div>
<svg style="left:567.5px;top:342.59999999999997px" width="8" height="8"><rect x="0" y="0" width="8" height="8" fill="#3d8eb9"/><text x="4" y="6.2" font-size="5.2" text-anchor="middle" fill="#1e3a4a" font-family="Liberation Sans" font-weight="700">01</text></svg>
<div class="t" style="left:578.3px;top:341.03px;line-height:11.14px;font-size:8.91px;color:#d27b72;font-weight:400;font-family:'Liberation Sans',sans-serif;transform:scaleX(0.915);"><span style="color:#d27b72">palette</span><span style="color:#8c8c8c"> = </span><span style="color:#8c8c8c">{NoneType}</span><span style="color:#bbbbbb"> None</span></div>
<svg style="left:567.5px;top:354.79999999999995px" width="8" height="8"><rect x="0" y="0" width="8" height="8" fill="#3d8eb9"/><text x="4" y="6.2" font-size="5.2" text-anchor="middle" fill="#1e3a4a" font-family="Liberation Sans" font-weight="700">01</text></svg>
<div class="t" style="left:578.3px;top:353.23px;line-height:11.14px;font-size:8.91px;color:#d27b72;font-weight:400;font-family:'Liberation Sans',sans-serif;transform:scaleX(0.887);"><span style="color:#d27b72">pyaccess</span><span style="color:#8c8c8c"> = </span><span style="color:#8c8c8c">{NoneType}</span><span style="color:#bbbbbb"> None</span></div>
<svg style="left:557px;top:368.0px" width="4" height="6"><path d="M0.5 0.5L3 3L0.5 5.5" fill="none" stroke="#afb1b3" stroke-width="0.9"/></svg>
<svg style="left:567.5px;top:367.0px" width="8" height="8"><rect x="0.5" y="0.3" width="7" height="1.6" fill="#c09340"/><rect x="0.5" y="3.1" width="7" height="1.6" fill="#c09340"/><rect x="0.5" y="5.9" width="7" height="1.6" fill="#c09340"/></svg>
<div class="a" style="left:0;top:0;width:937px;height:498px;clip-path:inset(249px 26px 32px 541px)">
<div class="t" style="left:578.3px;top:365.94px;line-height:10.12px;font-size:8.1px;color:#d27b72;font-weight:400;font-family:'Liberation Sans',sans-serif;"><span style="color:#d27b72">quantization</span><span style="color:#8c8c8c"> = </span><span style="color:#8c8c8c">{dict: 2}</span><span style="color:#bbbbbb"> {0: [6, 4, 4, 6, 9, 11, 12, 16, 4, 5, 5, 6, 8, 10, 12, 12, 4, 5, 5, 6, 10, 12, 12, 12</span></div>
</div>
<svg style="left:567.5px;top:379.2px" width="8" height="8"><rect x="0" y="0" width="8" height="8" fill="#3d8eb9"/><text x="4" y="6.2" font-size="5.2" text-anchor="middle" fill="#1e3a4a" font-family="Liberation Sans" font-weight="700">01</text></svg>
<div class="t" style="left:578.3px;top:377.63px;line-height:11.14px;font-size:8.91px;color:#d27b72;font-weight:400;font-family:'Liberation Sans',sans-serif;transform:scaleX(0.901);"><span style="color:#d27b72">readonly</span><span style="color:#8c8c8c"> = </span><span style="color:#8c8c8c">{int}</span><span style="color:#bbbbbb"> 1</span></div>
<svg style="left:557px;top:392.4px" width="4" height="6"><path d="M0.5 0.5L3 3L0.5 5.5" fill="none" stroke="#afb1b3" stroke-width="0.9"/></svg>
<svg style="left:565.5px;top:390.9px" width="10" height="9"><rect x="0" y="0.5" width="0.9" height="8" fill="#9aa7b0"/><rect x="3" y="0.8" width="7" height="1.6" fill="#3fa2c7"/><rect x="3" y="3.7" width="7" height="1.6" fill="#3fa2c7"/><rect x="3" y="6.6" width="7" height="1.6" fill="#3fa2c7"/></svg>
<div class="t" style="left:578.3px;top:389.83px;line-height:11.14px;font-size:8.91px;color:#d27b72;font-weight:400;font-family:'Liberation Sans',sans-serif;transform:scaleX(0.875);"><span style="color:#d27b72">size</span><span style="color:#8c8c8c"> = </span><span style="color:#8c8c8c">{tuple: 2}</span><span style="color:#bbbbbb"> (768, 512)</span></div>
<svg style="left:557px;top:404.59999999999997px" width="4" height="6"><path d="M0.5 0.5L3 3L0.5 5.5" fill="none" stroke="#afb1b3" stroke-width="0.9"/></svg>
<svg style="left:565.5px;top:403.09999999999997px" width="10" height="9"><rect x="0" y="0.5" width="0.9" height="8" fill="#9aa7b0"/><rect x="3" y="0.8" width="7" height="1.6" fill="#3fa2c7"/><rect x="3" y="3.7" width="7" height="1.6" fill="#3fa2c7"/><rect x="3" y="6.6" width="7" height="1.6" fill="#3fa2c7"/></svg>
<div class="t" style="left:578.3px;top:402.03px;line-height:11.14px;font-size:8.91px;color:#d27b72;font-weight:400;font-family:'Liberation Sans',sans-serif;transform:scaleX(0.879);"><span style="color:#d27b72">tile</span><span style="color:#8c8c8c"> = </span><span style="color:#8c8c8c">{list: 1}</span><span style="color:#bbbbbb"> [(&#x27;jpeg&#x27;, (0, 0, 768, 512), 0, (&#x27;RGB&#x27;, &#x27;&#x27;))]</span></div>
<svg style="left:567.5px;top:415.79999999999995px" width="8" height="8"><rect x="0" y="0" width="8" height="8" fill="#3d8eb9"/><text x="4" y="6.2" font-size="5.2" text-anchor="middle" fill="#1e3a4a" font-family="Liberation Sans" font-weight="700">01</text></svg>
<div class="t" style="left:578.3px;top:414.23px;line-height:11.14px;font-size:8.91px;color:#d27b72;font-weight:400;font-family:'Liberation Sans',sans-serif;transform:scaleX(0.924);"><span style="color:#d27b72">width</span><span style="color:#8c8c8c"> = </span><span style="color:#8c8c8c">{int}</span><span style="color:#bbbbbb"> 768</span></div>
<div class="t" style="left:911px;top:292.74px;line-height:10.12px;font-size:8.1px;color:#5a82b8;font-weight:400;font-family:'Liberation Sans',sans-serif;">...(显示)</div>
<div class="t" style="left:911px;top:365.94px;line-height:10.12px;font-size:8.1px;color:#5a82b8;font-weight:400;font-family:'Liberation Sans',sans-serif;">...(显示)</div>
<svg style="left:557px;top:429.0px" width="4" height="6"><path d="M0.5 0.5L3 3L0.5 5.5" fill="none" stroke="#afb1b3" stroke-width="0.9"/></svg>
<svg style="left:570px;top:428.0px" width="6" height="8"><circle cx="3" cy="2.5" r="1.8" fill="none" stroke="#afb1b3" stroke-width="0.9"/><path d="M3 4.3V7.5M3 6H4.5" stroke="#afb1b3" stroke-width="0.9"/></svg>
<div class="t" style="left:578.3px;top:426.43px;line-height:11.14px;font-size:8.91px;color:#bbbbbb;font-weight:400;font-family:'Liberation Sans',sans-serif;transform:scaleX(0.947);">Protected Attributes</div>
<svg style="left:556.9px;top:440.2px" width="8" height="8"><rect x="0" y="0" width="8" height="8" fill="#3d8eb9"/><text x="4" y="6.2" font-size="5.2" text-anchor="middle" fill="#1e3a4a" font-family="Liberation Sans" font-weight="700">01</text></svg>
<div class="t" style="left:567.7px;top:438.63px;line-height:11.14px;font-size:8.91px;color:#d27b72;font-weight:400;font-family:'Liberation Sans',sans-serif;transform:scaleX(0.909);"><span style="color:#d27b72">img_path</span><span style="color:#8c8c8c"> = </span><span style="color:#8c8c8c">{str}</span><span style="color:#bbbbbb"> &#x27;dataset/train/ants_image/0013035.jpg&#x27;</span></div>
<svg style="left:546px;top:453.4px" width="4" height="6"><path d="M0.5 0.5L3 3L0.5 5.5" fill="none" stroke="#afb1b3" stroke-width="0.9"/></svg>
<svg style="left:557.3px;top:452.4px" width="8" height="8"><rect x="0" y="0" width="3.5" height="3.5" fill="#3a94c0"/><rect x="4.5" y="0" width="3.5" height="3.5" fill="#9aa3a8"/><rect x="0" y="4.5" width="3.5" height="3.5" fill="#9aa3a8"/><rect x="4.5" y="4.5" width="3.5" height="3.5" fill="#3a94c0"/></svg>
<div class="t" style="left:567.5px;top:450.83px;line-height:11.14px;font-size:8.91px;color:#bbbbbb;font-weight:400;font-family:'Liberation Sans',sans-serif;transform:scaleX(0.808);">特殊变量</div>
</div>
<svg style="left:20px;top:474.5px" width="7" height="9"><path d="M1.5 0.5V8.5M1.5 6C1.5 3.5 5.5 4.5 5.5 2M5.5 0.5V2.5" fill="none" stroke="#afb1b3" stroke-width="1"/></svg>
<div class="t" style="left:30.6px;top:474.50px;line-height:11.00px;font-size:8.8px;color:#bbbbbb;font-weight:400;font-family:'Liberation Sans',sans-serif;transform:scaleX(0.783);">Version Control</div>
<svg style="left:91px;top:475.5px" width="6" height="7"><path d="M0.5 0.5L5.5 3.5L0.5 6.5Z" fill="#afb1b3"/></svg>
<div class="t" style="left:100.3px;top:474.50px;line-height:11.00px;font-size:8.8px;color:#bbbbbb;font-weight:400;font-family:'Liberation Sans',sans-serif;transform:scaleX(0.706);">运行</div>
<svg style="left:126px;top:475.5px" width="7" height="7"><path d="M0 1H1.3M2.5 1H7M0 3.5H1.3M2.5 3.5H7M0 6H1.3M2.5 6H7" stroke="#afb1b3" stroke-width="1"/></svg>
<div class="t" style="left:135.4px;top:474.50px;line-height:11.00px;font-size:8.8px;color:#bbbbbb;font-weight:400;font-family:'Liberation Sans',sans-serif;transform:scaleX(0.756);">TODO</div>
<svg style="left:166px;top:474.5px" width="7" height="8"><circle cx="3.5" cy="4" r="3.5" fill="#c75450"/><path d="M3.5 1.8V4.5M3.5 5.3V6.2" stroke="#fff" stroke-width="1"/></svg>
<div class="t" style="left:175.5px;top:474.50px;line-height:11.00px;font-size:8.8px;color:#bbbbbb;font-weight:400;font-family:'Liberation Sans',sans-serif;transform:scaleX(0.722);">问题</div>
<svg style="left:199.5px;top:475px" width="7" height="7"><rect x="0.5" y="0.5" width="6" height="6" fill="#afb1b3"/><path d="M1.5 2L3 3.5L1.5 5" fill="none" stroke="#3c3f41" stroke-width="0.8"/></svg>
<div class="t" style="left:209.6px;top:474.50px;line-height:11.00px;font-size:8.8px;color:#bbbbbb;font-weight:400;font-family:'Liberation Sans',sans-serif;transform:scaleX(0.722);">终端</div>
<svg style="left:235.5px;top:475px" width="8" height="8"><path d="M4 0.5L7.5 2.2L4 4L0.5 2.2Z" fill="#afb1b3"/><path d="M0.5 4L4 5.8L7.5 4M0.5 5.8L4 7.5L7.5 5.8" fill="none" stroke="#afb1b3" stroke-width="0.8"/></svg>
<div class="t" style="left:246.7px;top:474.50px;line-height:11.00px;font-size:8.8px;color:#bbbbbb;font-weight:400;font-family:'Liberation Sans',sans-serif;transform:scaleX(0.748);">Python Packages</div>
<svg style="left:311.5px;top:475px" width="8" height="8"><path d="M4 0.5C2 0.5 2 1.3 2 2V3H4.3V3.5H1.2C0.5 3.5 0.3 4.2 0.3 5C0.3 5.8 0.6 6.3 1.2 6.3H2V5.3C2 4.7 2.4 4.3 3 4.3H5C5.6 4.3 6 3.9 6 3.3V2C6 1 5.2 0.5 4 0.5ZM4 7.5C6 7.5 6 6.7 6 6V5H3.7V4.5H6.8C7.5 4.5 7.7 3.8 7.7 3C7.7 2.2 7.4 1.7 6.8 1.7H6V2.7C6 3.3 5.6 3.7 5 3.7H3C2.4 3.7 2 4.1 2 4.7V6C2 7 2.8 7.5 4 7.5Z" fill="#afb1b3"/></svg>
<div class="t" style="left:322.5px;top:474.50px;line-height:11.00px;font-size:8.8px;color:#d0d0d0;font-weight:400;font-family:'Liberation Sans',sans-serif;transform:scaleX(0.748);">Python 控制台</div>
<svg style="left:882.5px;top:474.5px" width="10" height="10"><path d="M4.5 0.6A3.9 3.9 0 1 1 1.6 7.2L0.8 8.8L2.9 8.1A3.9 3.9 0 0 1 4.5 0.6Z" fill="none" stroke="#afb1b3" stroke-width="1"/></svg>
<div class="t" style="left:892.5px;top:474.69px;line-height:9.62px;font-size:7.7px;color:#bbbbbb;font-weight:400;font-family:'Liberation Sans',sans-serif;transform:scaleX(0.819);">事件日志</div>
<svg style="left:3px;top:488px" width="9" height="9"><rect x="2.5" y="0.5" width="6" height="6" fill="none" stroke="#afb1b3" stroke-width="1"/><path d="M0.5 2.5V8.5H6.5" fill="none" stroke="#6e7072" stroke-width="1"/></svg>
<div class="t" style="left:719.7px;top:486.50px;line-height:11.00px;font-size:8.8px;color:#bbbbbb;font-weight:400;font-family:'Liberation Sans',sans-serif;transform:scaleX(0.809);">1:1</div>
<div class="t" style="left:737.5px;top:486.50px;line-height:11.00px;font-size:8.8px;color:#bbbbbb;font-weight:400;font-family:'Liberation Sans',sans-serif;transform:scaleX(0.761);">CRLF</div>
<div class="t" style="left:763px;top:486.50px;line-height:11.00px;font-size:8.8px;color:#bbbbbb;font-weight:400;font-family:'Liberation Sans',sans-serif;transform:scaleX(0.843);">UTF-8</div>
<div class="t" style="left:790.6px;top:486.50px;line-height:11.00px;font-size:8.8px;color:#bbbbbb;font-weight:400;font-family:'Liberation Sans',sans-serif;transform:scaleX(0.827);">4 个空格</div>
<div class="t" style="left:826.6px;top:486.50px;line-height:11.00px;font-size:8.8px;color:#bbbbbb;font-weight:400;font-family:'Liberation Sans',sans-serif;transform:scaleX(0.888);">Python 3.7 (PyTorch_cpu)</div>
<svg style="left:921.5px;top:486.5px" width="9" height="10"><path d="M2 4.5V2.5A2 2 0 0 1 6 2.5" fill="none" stroke="#afb1b3" stroke-width="1"/><rect x="3" y="4.5" width="6" height="5" fill="#afb1b3"/></svg>
<div class="a" style="left:930.5px;top:459px;width:6px;height:37px;border:1px solid #2b2b2b;border-radius:3px;background:#3c3f41;overflow:hidden"><div style="position:absolute;left:0;right:0;top:10px;bottom:0;background:#33b053;border-radius:0 0 2px 2px"></div></div>
<div class="a" style="left:340px;top:11px;width:330px;height:245px;background:rgba(0,0,0,0.18)"></div>
<div class="a" style="left:341px;top:12px;width:328px;height:22px;background:#f3f5f8;"></div>
<div class="a" style="left:341px;top:34px;width:328px;height:221px;background:#fafbfd;"></div>
<svg style="left:348px;top:16px" width="16" height="13"><defs><linearGradient id="lg1" x1="0" y1="0" x2="1" y2="0"><stop offset="0" stop-color="#9a88f4"/><stop offset="1" stop-color="#5536d8"/></linearGradient></defs><path d="M0.3 11.7Q3.5 4 5.3 3.8Q6.8 4 8.2 8Q9.6 4.8 10.8 5.2Q12.2 6 14.9 11.7Z" fill="url(#lg1)"/><circle cx="10.8" cy="2.6" r="2" fill="#ffab10"/></svg>
<div class="a" style="left:367px;top:24.6px;width:1.3px;height:1.3px;background:#555a66;"></div>
<div class="a" style="left:369.3px;top:24.6px;width:1.3px;height:1.3px;background:#555a66;"></div>
<div class="a" style="left:374px;top:18px;width:0.8px;height:11px;background:#dcdfe4;"></div>
<div class="t" style="left:380.4px;top:17.90px;line-height:11.00px;font-size:8.8px;color:#6b6f76;font-weight:400;font-family:'Liberation Sans',sans-serif;transform:scaleX(0.877);">286.81K ,768*512像素 , 73/73</div>
<div class="a" style="left:380.4px;top:28.3px;width:27px;height:0.6px;background:#8a8f96;"></div>
<div class="a" style="left:410px;top:28.3px;width:50px;height:0.6px;background:#8a8f96;"></div>
<svg style="left:507px;top:17px" width="12" height="12"><defs><radialGradient id="av" cx="0.5" cy="0.7" r="0.7"><stop offset="0" stop-color="#e0705a"/><stop offset="0.6" stop-color="#7a3a3a"/><stop offset="1" stop-color="#3a2a30"/></radialGradient></defs><circle cx="6" cy="6" r="6" fill="url(#av)"/></svg>
<svg style="left:523px;top:18px" width="10" height="10"><circle cx="5" cy="5" r="4.5" fill="#d9dce1"/><path d="M6.5 3H4.2L3.5 5H6L5 7.5" fill="none" stroke="#fff" stroke-width="1"/></svg>
<div class="a" style="left:540px;top:17px;width:36px;height:12px;border:1px solid #f5b56a;border-radius:2px;background:#fff8ef"></div>
<div class="t" style="left:543.5px;top:18.04px;line-height:10.31px;font-size:8.25px;color:#f08c1a;font-weight:400;font-family:'Liberation Sans',sans-serif;transform:scaleX(0.906);">开通会员</div>
<div class="a" style="left:581px;top:18px;width:0.8px;height:11px;background:#dcdfe4;"></div>
<div class="a" style="left:587px;top:19.5px;width:8px;height:1px;background:#555a60;"></div>
<div class="a" style="left:587px;top:23px;width:8px;height:1px;background:#555a60;"></div>
<div class="a" style="left:587px;top:26.5px;width:8px;height:1px;background:#555a60;"></div>
<svg style="left:603px;top:18px" width="9" height="10"><path d="M1 0.8H8M2 0.8V5.5H7V0.8M0.5 5.5H8.5M4.5 5.5V10" fill="none" stroke="#555a60" stroke-width="1"/></svg>
<div class="a" style="left:619px;top:23px;width:8px;height:1px;background:#555a60;"></div>
<div class="a" style="left:633.8px;top:19px;width:8px;height:8px;border:1px solid #555a60"></div>
<svg style="left:650.5px;top:19px" width="8" height="8"><path d="M0.3 0.3L7.7 7.7M7.7 0.3L0.3 7.7" stroke="#555a60" stroke-width="1"/></svg>
<svg style="left:360px;top:40px" width="11" height="11"><path d="M0.5 3.5V0.5H3.5M0.5 0.5L3.5 3.5M10.5 3.5V0.5H7.5M10.5 0.5L7.5 3.5M0.5 7.5V10.5H3.5M0.5 10.5L3.5 7.5M10.5 7.5V10.5H7.5M10.5 10.5L7.5 7.5" fill="none" stroke="#4d5157" stroke-width="0.9"/></svg>
<svg style="left:384px;top:39.5px" width="12" height="12"><rect x="0.5" y="0.5" width="11" height="11" rx="1.5" fill="none" stroke="#4d5157" stroke-width="0.9"/><path d="M3.5 3.5V8.5M6 4.3V4.9M6 7V7.6M8.5 3.5V8.5" stroke="#4d5157" stroke-width="0.9"/></svg>
<svg style="left:407px;top:39px" width="13" height="13"><circle cx="5.8" cy="5.8" r="5.2" fill="none" stroke="#4d5157" stroke-width="0.9"/><path d="M9.5 9.5L12.5 12.5M5.8 3.5V8.1M3.5 5.8H8.1" stroke="#4d5157" stroke-width="0.9"/></svg>
<svg style="left:432px;top:39px" width="13" height="13"><circle cx="5.8" cy="5.8" r="5.2" fill="none" stroke="#4d5157" stroke-width="0.9"/><path d="M9.5 9.5L12.5 12.5M3.5 5.8H8.1" stroke="#4d5157" stroke-width="0.9"/></svg>
<svg style="left:458px;top:40px" width="8" height="11"><path d="M7 0.5L1.5 5.5L7 10.5" fill="none" stroke="#4d5157" stroke-width="0.9"/></svg>
<svg style="left:485px;top:40.5px" width="9" height="10"><rect x="0.5" y="0.5" width="8" height="8" rx="1" fill="none" stroke="#4d5157" stroke-width="0.9"/><path d="M2 7.5L4 5L6 7" fill="none" stroke="#4d5157" stroke-width="0.9"/><circle cx="6" cy="3" r="1" fill="#4d5157"/></svg>
<div class="t" style="left:499px;top:40.84px;line-height:10.31px;font-size:8.25px;color:#1f2329;font-weight:400;font-family:'Liberation Sans',sans-serif;transform:scaleX(0.875);">编辑</div>
<svg style="left:516.5px;top:44px" width="4" height="3"><path d="M0 0H4L2 2.5Z" fill="#4d5157"/></svg>
<svg style="left:533px;top:40px" width="10" height="10"><path d="M1 4.5V2H8.5M6.5 0.3L8.7 2L6.5 3.7M9 5.5V8H1.5M3.5 6.3L1.3 8L3.5 9.7" fill="none" stroke="#4d5157" stroke-width="0.9"/></svg>
<div class="t" style="left:547px;top:40.84px;line-height:10.31px;font-size:8.25px;color:#1f2329;font-weight:400;font-family:'Liberation Sans',sans-serif;transform:scaleX(0.875);">转换</div>
<svg style="left:564.5px;top:44px" width="4" height="3"><path d="M0 0H4L2 2.5Z" fill="#4d5157"/></svg>
<svg style="left:582px;top:40px" width="10" height="10"><path d="M2.5 3V0.5H7.5V3M2.5 7.5H0.5V3H9.5V7.5H7.5M2.5 6H7.5V9.5H2.5Z" fill="none" stroke="#4d5157" stroke-width="0.9"/></svg>
<div class="t" style="left:595px;top:40.84px;line-height:10.31px;font-size:8.25px;color:#1f2329;font-weight:400;font-family:'Liberation Sans',sans-serif;transform:scaleX(0.875);">打印</div>
<svg style="left:622px;top:40px" width="11" height="10"><path d="M3.5 2.5V0.5H7.5V2.5M0.5 2.5H10.5V9.5H0.5ZM0.5 5.5H10.5M5.5 4.5V6.5" fill="none" stroke="#4d5157" stroke-width="0.9"/></svg>
<div class="t" style="left:636px;top:40.84px;line-height:10.31px;font-size:8.25px;color:#1f2329;font-weight:400;font-family:'Liberation Sans',sans-serif;transform:scaleX(0.917);">工具箱</div>
<svg style="left:385px;top:56px" width="240" height="160" viewBox="0 0 240 160">
<defs><linearGradient id="bgb" x1="1" y1="0" x2="0" y2="1"><stop offset="0" stop-color="#5094e6"/><stop offset="1" stop-color="#579bea"/></linearGradient>
<radialGradient id="gst" cx="0.4" cy="0.35" r="0.7"><stop offset="0" stop-color="#34426a"/><stop offset="0.6" stop-color="#172240"/><stop offset="1" stop-color="#0b1224"/></radialGradient>
<radialGradient id="thx" cx="0.4" cy="0.3" r="0.7"><stop offset="0" stop-color="#b47c3e"/><stop offset="1" stop-color="#603814"/></radialGradient>
<radialGradient id="hd" cx="0.6" cy="0.35" r="0.7"><stop offset="0" stop-color="#a05a2a"/><stop offset="1" stop-color="#4e2410"/></radialGradient></defs>
<rect width="240" height="160" fill="url(#bgb)"/>
<g fill="none" stroke="#a8773f" stroke-linecap="round" stroke-linejoin="round">
<path d="M69.6 61.6L70.4 87.2L74.9 108.3" stroke-width="1.4"/>
<path d="M90 78L71 84Q62 88 61 91Q63 94 72 93L88 92L95 83" stroke-width="1.9"/>
<path d="M92.2 76L93.7 97.7L84.7 102.2L81.7 99.2" stroke-width="1.5"/>
<path d="M125.4 73.6L119.3 87.2L98.3 100.7L89.2 103.8" stroke-width="1.4"/>
</g>
<path d="M74.2 49.5Q84 45.5 92.2 48Q99 51 103 56Q110 58 113 66Q115 74 110 80Q101 84 91 80Q80 76 74 67Q70 58 74.2 49.5Z" fill="url(#thx)"/>
<path d="M80 52Q88 49 95 53Q92 60 86 62Q80 60 80 52Z" fill="#c89858" opacity="0.45"/>
<path d="M76 62Q84 74 96 79Q106 81 112 75L111 71Q101 75 91 71Q81 67 76 58Z" fill="#4a2a10" opacity="0.45"/>
<path d="M104 57L114 54L109 61Z" fill="#a8753c"/>
<path d="M112 67Q120 58 126 54Q132 53 132 56Q130 60 124 64L115 75Z" fill="#8e5c2a"/>
<path d="M110 79Q120 73 127 71Q131 73 128 78L121 85Q114 85 108 83Z" fill="#7e5228"/>
<path d="M95 43.5Q97 60 98.5 78" fill="none" stroke="#c48c4a" stroke-width="2.2" stroke-linecap="round"/>
<path d="M40.3 69Q41 57 47 52.6Q52 48 57.6 47.3Q64 47 68 49.5Q72 53 71.5 60Q71 70 65 78Q60 82 54.6 83Q51 88 46 92Q41.5 92 40.5 84Q39.5 76 40.3 69Z" fill="url(#hd)"/>
<path d="M40.5 66Q46 57 55 59Q49 65 47.5 75Q46.5 84 48.5 92L45 93Q39 80 40.5 66Z" fill="#353040"/>
<path d="M41 64Q47 57 54 58.5" fill="none" stroke="#b8c4d8" stroke-width="0.9"/>
<path d="M43.5 75Q43.5 85 46.5 92" fill="none" stroke="#c0c8d8" stroke-width="1"/>
<path d="M128.5 64Q129 55 136 51Q146 46.5 160 48Q172 49.5 181 54Q190 58 197 61.5Q190 65 182 70Q172 76 160 78.5Q145 80 136 75Q128.5 71 128.5 64Z" fill="url(#gst)"/>
<path d="M136 62Q146 57 160 62" fill="none" stroke="#6a7c98" stroke-width="1" opacity="0.55"/>
<path d="M160 49Q166 62 159 78M175 51Q179 62 173 74" fill="none" stroke="#0a1020" stroke-width="0.8" opacity="0.55"/>
<path d="M196 61.5L201 61" stroke="#e0e0d8" stroke-width="0.9"/>
<rect x="192" y="151" width="48" height="9" fill="#000"/>
<text x="216" y="158.2" font-size="7.6" font-weight="700" text-anchor="middle" fill="#fff" font-family="Liberation Mono">UGA0013035</text>
<path d="M109 160L112 154H128L131 160Z" fill="#f4f6f9"/>
<path d="M118 156.5H122L120 158.5Z" fill="#555"/>
</svg>
<svg style="left:340px;top:221px;clip-path:inset(0 0 0 18px);" width="28" height="28" viewBox="0 0 28 28"><defs><linearGradient id="cg340" x1="0" y1="0" x2="0" y2="1"><stop offset="0" stop-color="#e6b77b"/><stop offset="1" stop-color="#f0dcb3"/></linearGradient></defs>
<rect width="28" height="28" rx="2" fill="#f0f1f3"/>
<path d="M9 1Q11.5 3 13.4 5Q17 4.2 20.3 5Q22 3 23.8 1Q26 12 27.6 26.8H6.1Q7.5 12 9 1Z" fill="url(#cg340)"/>
<path d="M7 26.2Q1.2 26.2 1 22Q1 19.2 3.8 18.8" fill="none" stroke="#f0dcb3" stroke-width="1.8"/>
<circle cx="12" cy="11.2" r="1.35" fill="#1a1a1a"/><circle cx="21.8" cy="11.2" r="1.35" fill="#1a1a1a"/>
<path d="M15.8 14.3H17.8" stroke="#1a1a1a" stroke-width="0.7" opacity="0.5"/></svg>
<svg style="left:374px;top:221px;" width="28" height="28" viewBox="0 0 28 28"><defs><linearGradient id="cg374" x1="0" y1="0" x2="0" y2="1"><stop offset="0" stop-color="#2d5594"/><stop offset="1" stop-color="#152a5e"/></linearGradient></defs>
<rect width="28" height="28" rx="2" fill="#f0f1f3"/>
<path d="M9 1Q11.5 3 13.4 5Q17 4.2 20.3 5Q22 3 23.8 1Q26 12 27.6 26.8H6.1Q7.5 12 9 1Z" fill="url(#cg374)"/>
<path d="M7 26.2Q1.2 26.2 1 22Q1 19.2 3.8 18.8" fill="none" stroke="#152a5e" stroke-width="1.8"/>
<circle cx="12" cy="11.2" r="1.35" fill="#ffffff"/><circle cx="21.8" cy="11.2" r="1.35" fill="#ffffff"/>
<path d="M15.8 14.3H17.8" stroke="#ffffff" stroke-width="0.7" opacity="0.5"/></svg>
<svg style="left:408.2px;top:221px;" width="28" height="28" viewBox="0 0 28 28"><defs><linearGradient id="cg408" x1="0" y1="0" x2="0" y2="1"><stop offset="0" stop-color="#e6b77b"/><stop offset="1" stop-color="#f0dcb3"/></linearGradient></defs>
<rect width="28" height="28" rx="2" fill="#f0f1f3"/>
<path d="M9 1Q11.5 3 13.4 5Q17 4.2 20.3 5Q22 3 23.8 1Q26 12 27.6 26.8H6.1Q7.5 12 9 1Z" fill="url(#cg408)"/>
<path d="M7 26.2Q1.2 26.2 1 22Q1 19.2 3.8 18.8" fill="none" stroke="#f0dcb3" stroke-width="1.8"/>
<circle cx="12" cy="11.2" r="1.35" fill="#1a1a1a"/><circle cx="21.8" cy="11.2" r="1.35" fill="#1a1a1a"/>
<path d="M15.8 14.3H17.8" stroke="#1a1a1a" stroke-width="0.7" opacity="0.5"/></svg>
<svg style="left:442.4px;top:221px;" width="28" height="28" viewBox="0 0 28 28"><defs><linearGradient id="cg442" x1="0" y1="0" x2="0" y2="1"><stop offset="0" stop-color="#e6b77b"/><stop offset="1" stop-color="#f0dcb3"/></linearGradient></defs>
<rect width="28" height="28" rx="2" fill="#f0f1f3"/>
<path d="M9 1Q11.5 3 13.4 5Q17 4.2 20.3 5Q22 3 23.8 1Q26 12 27.6 26.8H6.1Q7.5 12 9 1Z" fill="url(#cg442)"/>
<path d="M7 26.2Q1.2 26.2 1 22Q1 19.2 3.8 18.8" fill="none" stroke="#f0dcb3" stroke-width="1.8"/>
<circle cx="12" cy="11.2" r="1.35" fill="#1a1a1a"/><circle cx="21.8" cy="11.2" r="1.35" fill="#1a1a1a"/>
<path d="M15.8 14.3H17.8" stroke="#1a1a1a" stroke-width="0.7" opacity="0.5"/></svg>
<svg style="left:476.5px;top:221px;" width="28" height="28" viewBox="0 0 28 28"><defs><linearGradient id="cg476" x1="0" y1="0" x2="0" y2="1"><stop offset="0" stop-color="#2d5594"/><stop offset="1" stop-color="#152a5e"/></linearGradient></defs>
<rect width="28" height="28" rx="2" fill="#f0f1f3"/>
<path d="M9 1Q11.5 3 13.4 5Q17 4.2 20.3 5Q22 3 23.8 1Q26 12 27.6 26.8H6.1Q7.5 12 9 1Z" fill="url(#cg476)"/>
<path d="M7 26.2Q1.2 26.2 1 22Q1 19.2 3.8 18.8" fill="none" stroke="#152a5e" stroke-width="1.8"/>
<circle cx="12" cy="11.2" r="1.35" fill="#ffffff"/><circle cx="21.8" cy="11.2" r="1.35" fill="#ffffff"/>
<path d="M15.8 14.3H17.8" stroke="#ffffff" stroke-width="0.7" opacity="0.5"/></svg>
<svg style="left:510.5px;top:221px;" width="28" height="28" viewBox="0 0 28 28"><defs><linearGradient id="cg510" x1="0" y1="0" x2="0" y2="1"><stop offset="0" stop-color="#2d5594"/><stop offset="1" stop-color="#152a5e"/></linearGradient></defs>
<rect width="28" height="28" rx="2" fill="#f0f1f3"/>
<path d="M9 1Q11.5 3 13.4 5Q17 4.2 20.3 5Q22 3 23.8 1Q26 12 27.6 26.8H6.1Q7.5 12 9 1Z" fill="url(#cg510)"/>
<path d="M7 26.2Q1.2 26.2 1 22Q1 19.2 3.8 18.8" fill="none" stroke="#152a5e" stroke-width="1.8"/>
<circle cx="12" cy="11.2" r="1.35" fill="#ffffff"/><circle cx="21.8" cy="11.2" r="1.35" fill="#ffffff"/>
<path d="M15.8 14.3H17.8" stroke="#ffffff" stroke-width="0.7" opacity="0.5"/></svg>
<svg style="left:544.6px;top:221px;" width="28" height="28" viewBox="0 0 28 28"><defs><linearGradient id="cg544" x1="0" y1="0" x2="0" y2="1"><stop offset="0" stop-color="#e6b77b"/><stop offset="1" stop-color="#f0dcb3"/></linearGradient></defs>
<rect width="28" height="28" rx="2" fill="#f0f1f3"/>
<path d="M9 1Q11.5 3 13.4 5Q17 4.2 20.3 5Q22 3 23.8 1Q26 12 27.6 26.8H6.1Q7.5 12 9 1Z" fill="url(#cg544)"/>
<path d="M7 26.2Q1.2 26.2 1 22Q1 19.2 3.8 18.8" fill="none" stroke="#f0dcb3" stroke-width="1.8"/>
<circle cx="12" cy="11.2" r="1.35" fill="#1a1a1a"/><circle cx="21.8" cy="11.2" r="1.35" fill="#1a1a1a"/>
<path d="M15.8 14.3H17.8" stroke="#1a1a1a" stroke-width="0.7" opacity="0.5"/></svg>
<div class="a" style="left:577px;top:219px;width:32px;height:32px;border:1.5px solid #4d8cf5;border-radius:3px;background:#eef0f3"></div>
<svg style="left:579.5px;top:226px" width="27" height="18" viewBox="0 0 27 18"><rect width="27" height="18" fill="#4a95e6"/><path d="M7 9Q8 6 11 6Q14 6 15 8Q17 6 20 6.5Q22 7.5 20 9.5Q16 11 12 11Q8 11 7 9Z" fill="#4a3a50"/><path d="M8 8Q10 6.5 12 7.5Q11 10 9 10Z" fill="#a86a35"/><rect x="21" y="16" width="6" height="2" fill="#000"/></svg>
<div class="a" style="left:615.5px;top:223px;width:0.8px;height:25px;background:#e2e4e8;"></div>
<div class="t" style="left:622.3px;top:231.64px;line-height:10.31px;font-size:8.25px;color:#333;font-weight:400;font-family:'Liberation Sans',sans-serif;transform:scaleX(0.897);">全部图片</div>
</body></html>
